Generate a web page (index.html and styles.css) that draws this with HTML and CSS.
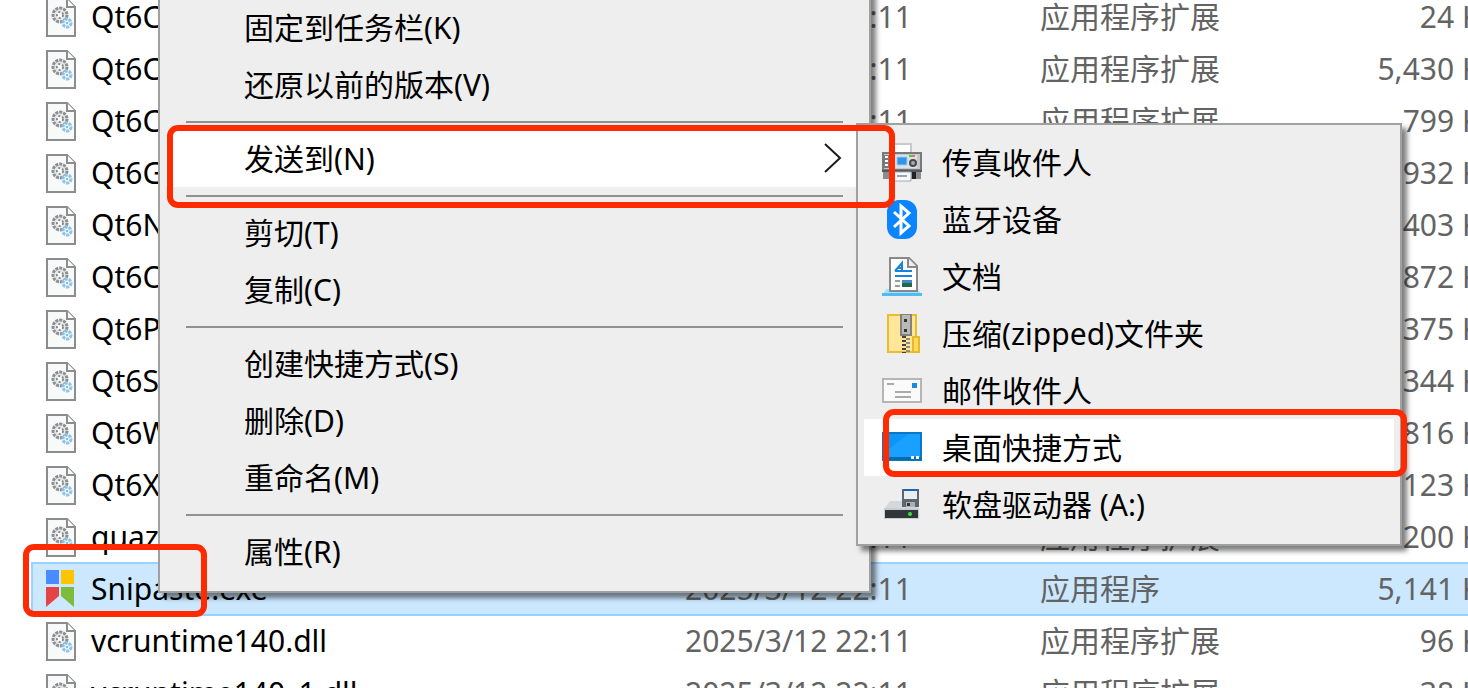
FILE: index.html
```
<!DOCTYPE html>
<html lang="zh-CN">
  <head>
    <meta charset="utf-8" />
    <title>Snipaste</title>
    <link rel="stylesheet" href="styles.css">
  </head>
  <body>
    <!-- shared icon for the dll rows -->
    <svg class="defs" width="0" height="0" aria-hidden="true">
      <symbol id="dll" viewBox="0 0 30 39">
        <path d="M1 1h20l8 8v29H1z" fill="#f8f9f9" stroke="#8c8c8c" stroke-width="2" />
        <path d="M21 1v8h8" fill="#fff" stroke="#8c8c8c" stroke-width="2" />
        <circle cx="14" cy="17" r="7" fill="#e6e9ea" stroke="#8b9193" stroke-width="3" stroke-dasharray="3 1" />
        <circle cx="14" cy="17" r="3" fill="#fff" stroke="#7f8688" stroke-width="2" stroke-dasharray="2 2" />
        <circle cx="21" cy="25" r="4" fill="#eaf6fd" stroke="#8dc3e6" stroke-width="3" stroke-dasharray="3 1" />
        <circle cx="21" cy="25" r="1" fill="#62a8d6" />
      </symbol>
    </svg>

    <main class="explorer">
      <table class="files">
        <colgroup>
          <col class="col-name" />
          <col class="col-date" />
          <col class="col-type" />
          <col />
        </colgroup>
        <tbody>
          <tr>
            <td><div class="file"><svg><use href="#dll" /></svg>Qt6Core.dll</div></td>
            <td>2025/3/12 22:11</td>
            <td>应用程序扩展</td>
            <td class="size">24 KB</td>
          </tr>
          <tr>
            <td><div class="file"><svg><use href="#dll" /></svg>Qt6Core.dll</div></td>
            <td>2025/3/12 22:11</td>
            <td>应用程序扩展</td>
            <td class="size">5,430 KB</td>
          </tr>
          <tr>
            <td><div class="file"><svg><use href="#dll" /></svg>Qt6Core5.dll</div></td>
            <td>2025/3/12 22:11</td>
            <td>应用程序扩展</td>
            <td class="size">799 KB</td>
          </tr>
          <tr>
            <td><div class="file"><svg><use href="#dll" /></svg>Qt6Gui.dll</div></td>
            <td>2025/3/12 22:11</td>
            <td>应用程序扩展</td>
            <td class="size">932 KB</td>
          </tr>
          <tr>
            <td><div class="file"><svg><use href="#dll" /></svg>Qt6Network.dll</div></td>
            <td>2025/3/12 22:11</td>
            <td>应用程序扩展</td>
            <td class="size">403 KB</td>
          </tr>
          <tr>
            <td><div class="file"><svg><use href="#dll" /></svg>Qt6OpenGL.dll</div></td>
            <td>2025/3/12 22:11</td>
            <td>应用程序扩展</td>
            <td class="size">872 KB</td>
          </tr>
          <tr>
            <td><div class="file"><svg><use href="#dll" /></svg>Qt6Print.dll</div></td>
            <td>2025/3/12 22:11</td>
            <td>应用程序扩展</td>
            <td class="size">375 KB</td>
          </tr>
          <tr>
            <td><div class="file"><svg><use href="#dll" /></svg>Qt6Svg.dll</div></td>
            <td>2025/3/12 22:11</td>
            <td>应用程序扩展</td>
            <td class="size">344 KB</td>
          </tr>
          <tr>
            <td><div class="file"><svg><use href="#dll" /></svg>Qt6Widgets.dll</div></td>
            <td>2025/3/12 22:11</td>
            <td>应用程序扩展</td>
            <td class="size">816 KB</td>
          </tr>
          <tr>
            <td><div class="file"><svg><use href="#dll" /></svg>Qt6Xml.dll</div></td>
            <td>2025/3/12 22:11</td>
            <td>应用程序扩展</td>
            <td class="size">123 KB</td>
          </tr>
          <tr>
            <td><div class="file"><svg><use href="#dll" /></svg>quazip.dll</div></td>
            <td>2025/3/12 22:11</td>
            <td>应用程序扩展</td>
            <td class="size">200 KB</td>
          </tr>
          <tr class="selected">
            <td>
              <div class="file">
                <svg viewBox="0 0 30 39">
                  <path d="M0 0h13v14H0z" fill="#4a8cff" />
                  <path d="M15 0h13v14H15z" fill="#ffc400" />
                  <path d="M0 17h13v9L0 37z" fill="#e64444" />
                  <path d="M15 17h13v20L15 26z" fill="#7cbb3c" />
                </svg>
                Snipaste.exe
              </div>
            </td>
            <td>2025/3/12 22:11</td>
            <td>应用程序</td>
            <td class="size">5,141 KB</td>
          </tr>
          <tr>
            <td><div class="file"><svg><use href="#dll" /></svg>vcruntime140.dll</div></td>
            <td>2025/3/12 22:11</td>
            <td>应用程序扩展</td>
            <td class="size">96 KB</td>
          </tr>
          <tr>
            <td><div class="file"><svg><use href="#dll" /></svg>vcruntime140_1.dll</div></td>
            <td>2025/3/12 22:11</td>
            <td>应用程序扩展</td>
            <td class="size">38 KB</td>
          </tr>
        </tbody>
      </table>

      <div class="menu context-menu" role="menu">
        <button type="button" role="menuitem">固定到任务栏(K)</button>
        <button type="button" role="menuitem">还原以前的版本(V)</button>
        <hr />
        <button type="button" role="menuitem" class="active" aria-haspopup="true">
          发送到(N)
          <svg class="arrow" viewBox="0 0 20 32"><path d="M2 1l15 14L2 29" fill="none" stroke="#1c1c1c" stroke-width="2" /></svg>
        </button>
        <hr />
        <button type="button" role="menuitem">剪切(T)</button>
        <button type="button" role="menuitem">复制(C)</button>
        <hr />
        <button type="button" role="menuitem">创建快捷方式(S)</button>
        <button type="button" role="menuitem">删除(D)</button>
        <button type="button" role="menuitem">重命名(M)</button>
        <hr />
        <button type="button" role="menuitem">属性(R)</button>
      </div>

      <div class="menu send-menu" role="menu">
        <button type="button" role="menuitem">
          <svg viewBox="0 0 40 40">
            <path d="M11 1h18v12H11z" fill="#fff" stroke="#c9c9c9" stroke-width="2" />
            <path d="M1 10h38v17H1z" fill="#c5c7c9" stroke="#77797c" stroke-width="2" />
            <path d="M8 12h27v13H8z" fill="#dfe2e4" />
            <path d="M2 12h5v13H2z" fill="#777b80" />
            <path d="M3 14h3M3 18h3M3 22h3" stroke="#fff" stroke-width="2" />
            <path d="M15 14h10v8H15z" fill="#2e96ea" stroke="#9bcdf2" />
            <circle cx="31" cy="20" r="3" fill="#aaa" stroke="#42484d" stroke-width="2" />
            <path d="M27 12h3v2h-3z" fill="#3fd42a" />
            <path d="M30 12h3v2h-3z" fill="#f26a6a" />
            <path d="M1 27h38v9H1z" fill="#898d91" />
            <path d="M0 27h40v2H0z" fill="#54585c" />
            <path d="M30 29h4v7h-4z" fill="#222" />
            <path d="M11 29h18v9H11z" fill="#f7f9fb" stroke="#a2a9b4" />
            <path d="M15 33h10" stroke="#98a3b2" stroke-width="2" />
          </svg>
          传真收件人
        </button>
        <button type="button" role="menuitem">
          <svg viewBox="0 0 40 40">
            <rect x="5" y="0" width="30" height="39" rx="12" fill="#0a84ff" />
            <path d="M12 12l15 14-8 7V6l8 7-15 14" fill="none" stroke="#fff" stroke-width="3" />
          </svg>
          蓝牙设备
        </button>
        <button type="button" role="menuitem">
          <svg viewBox="0 0 40 40">
            <path d="M4 32h32l3 5H1z" fill="#a5e2fd" />
            <path d="M0 36h40v3H0z" fill="#4fbdf1" />
            <path d="M8 1h19l8 8v25H8z" fill="#fff" stroke="#898989" stroke-width="2" />
            <path d="M26 1v9h9" fill="#eee" stroke="#898989" stroke-width="2" />
            <path d="M13 14l7-8v8M15 11h5" fill="none" stroke="#1a85d1" stroke-width="2" />
            <path d="M13 14h17M13 19h17" stroke="#1684dc" stroke-width="2" />
            <path d="M13 24h5M13 29h5" stroke="#9b9b9b" stroke-width="2" />
            <path d="M20 23h10v3H20z" fill="#438ac8" />
            <path d="M20 26h10v4H20z" fill="#21694b" />
          </svg>
          文档
        </button>
        <button type="button" role="menuitem">
          <svg viewBox="0 0 40 40">
            <path d="M6 1h28v37H6z" fill="#ffe69a" stroke="#e8bd2f" stroke-width="2" />
            <path d="M31 23h6v15h-6z" fill="#ffd85e" stroke="#e5b929" stroke-width="2" />
            <path d="M19 0h10v21H19z" fill="#b9b9b7" stroke="#85827b" stroke-width="2" />
            <path d="M22 5h3v3h-3zM22 15h3v3h-3z" fill="#333" />
            <path d="M22 22v17" stroke="#454039" stroke-width="4" stroke-dasharray="2 2" />
            <path d="M26 24v15" stroke="#918b80" stroke-width="4" stroke-dasharray="2 2" />
          </svg>
          压缩(zipped)文件夹
        </button>
        <button type="button" role="menuitem">
          <svg viewBox="0 0 40 40">
            <path d="M1 8h38v23H1z" fill="#fafafa" stroke="#b5b5b5" stroke-width="2" />
            <path d="M5 13h7M13 21h16M13 26h16" stroke="#aaa" stroke-width="2" />
            <path d="M30 12h5v5h-5z" fill="#168ce5" />
          </svg>
          邮件收件人
        </button>
        <button type="button" role="menuitem" class="active">
          <svg viewBox="0 0 40 40">
            <path d="M1 5h38v27H1z" fill="#1aa0ff" stroke="#0879c9" stroke-width="2" />
            <path d="M2 25L26 6H2z" fill="#0c96f8" />
            <path d="M1 29h38v3H1z" fill="#086bae" />
            <path d="M29 28h3v3h-3zM34 28h3v3h-3z" fill="#fff" />
          </svg>
          桌面快捷方式
        </button>
        <button type="button" role="menuitem">
          <svg viewBox="0 0 40 40">
            <path d="M8 16h24l5 8H2z" fill="#d5d8db" />
            <path d="M20 4h17v18H20z" fill="#5d666d" />
            <path d="M22 6h13v8H22z" fill="#e7edf1" />
            <path d="M22 4h13v2H22z" fill="#1763bd" />
            <path d="M24 17h9v5h-9z" fill="#aab0b4" />
            <path d="M25 18h3v3h-3z" fill="#30363a" />
            <path d="M2 23h35v11H2z" fill="#c7ccd0" />
            <path d="M3 25h33v8H3z" fill="#30363a" />
            <circle cx="28" cy="29" r="2" fill="#37e43e" />
          </svg>
          软盘驱动器 (A:)
        </button>
      </div>

      <div class="mark mark-send"></div>
      <div class="mark mark-desktop"></div>
      <div class="mark mark-file"></div>
    </main>
  </body>
</html>
```
FILE: styles.css
```
body {
  margin: 0;
  background-color: #fff;
  color: #000;
  font-family: "Noto Sans", "Noto Sans CJK SC", sans-serif;
  font-size: 30px;
  line-height: 40px;
}

.defs {
  position: absolute;
}

.explorer {
  position: relative;
  height: 100vh;
  overflow: hidden;
}

/* file list */
.files {
  width: 100%;
  margin: -9px 0 0 32px;
  table-layout: fixed;
  border-collapse: collapse;
  white-space: nowrap;
}

.col-name {
  width: 653px;
}

.col-date {
  width: 355px;
}

.col-type {
  width: 220px;
}

.files td {
  height: 52px;
  padding: 0;
  color: #636363;
}

.files .size {
  text-align: right;
}

.file {
  display: flex;
  align-items: center;
  gap: 15px;
  padding-left: 14px;
  color: #000;
}

.file svg {
  width: 30px;
  height: 39px;
}

.files .selected {
  background-color: #cce8ff;
  outline: 2px solid #99d1ff;
  outline-offset: -1px;
}

/* menus */
.menu {
  position: absolute;
  box-sizing: border-box;
  padding: 9px 6px 11px;
  border: 2px solid #a0a0a0;
  background-color: #eee;
  box-shadow: 5px 5px 5px rgba(0, 0, 0, 0.5);
}

.menu button {
  display: flex;
  align-items: center;
  width: 100%;
  height: 57px;
  padding: 0 20px 0 78px;
  border: none;
  background-color: transparent;
  color: #000;
  font: inherit;
  text-align: left;
  white-space: nowrap;
}

.menu button:hover,
.menu .active {
  background-color: #fff;
}

.menu hr {
  height: 2px;
  margin: 8px 20px 7px;
  border: none;
  background-color: #919191;
}

.menu .arrow {
  width: 20px;
  height: 32px;
  margin-left: auto;
}

.context-menu {
  top: -12px;
  left: 158px;
  width: 713px;
}

.send-menu {
  top: 123px;
  left: 856px;
  width: 546px;
}

.send-menu button {
  gap: 20px;
  padding: 0 18px;
}

.send-menu svg {
  width: 40px;
  height: 40px;
}

/* red frames round the things to click */
.mark {
  position: absolute;
  box-sizing: border-box;
  border: 6px solid #ff2a00;
  border-radius: 11px;
  pointer-events: none;
}

.mark-send {
  top: 125px;
  left: 167px;
  width: 728px;
  height: 83px;
}

.mark-desktop {
  top: 409px;
  left: 883px;
  width: 524px;
  height: 68px;
}

.mark-file {
  top: 544px;
  left: 23px;
  width: 184px;
  height: 73px;
}
```
